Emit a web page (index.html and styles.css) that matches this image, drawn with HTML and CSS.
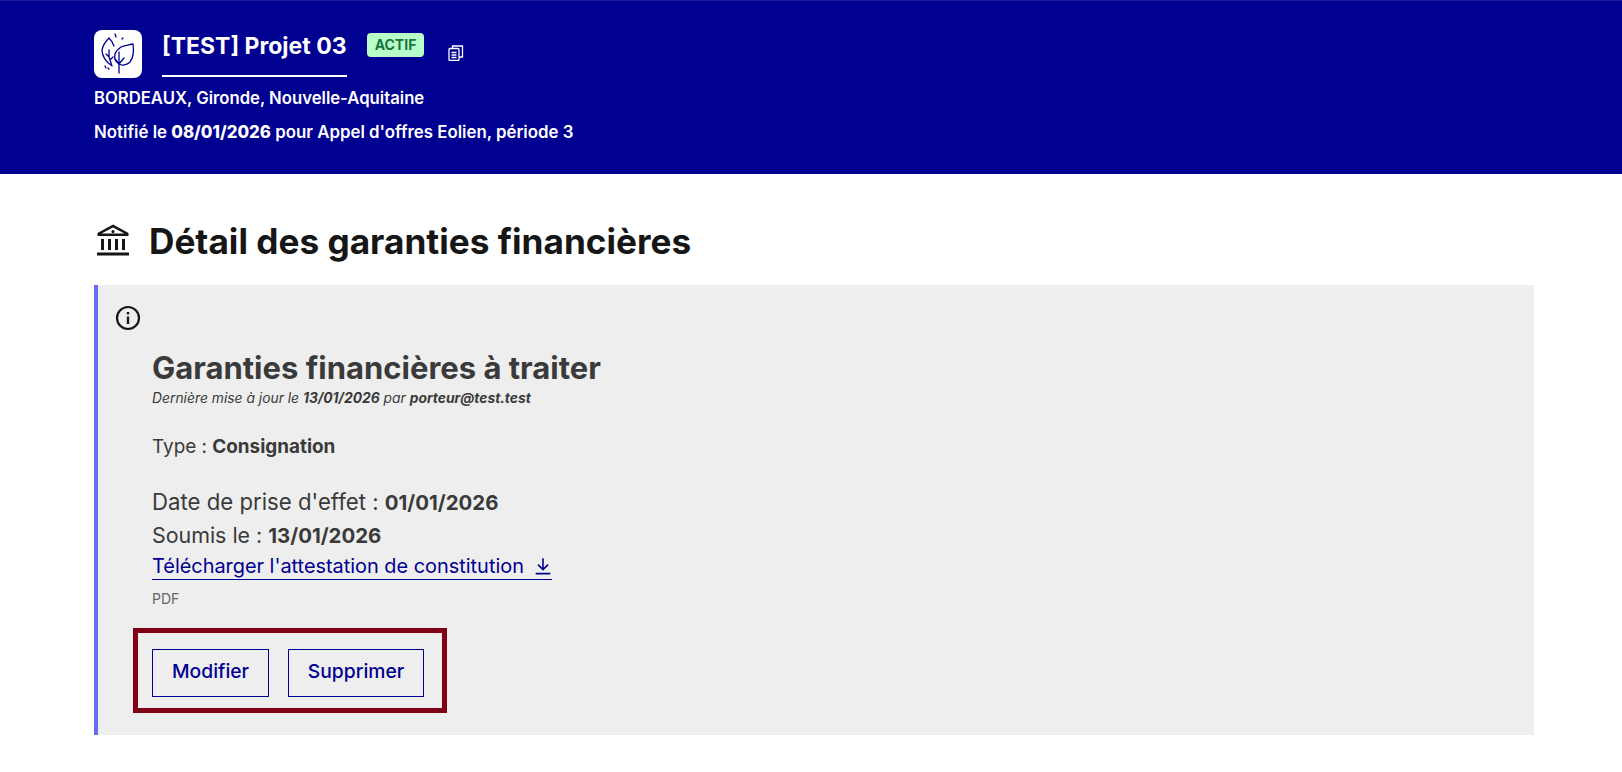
FILE: index.html
```html
<!DOCTYPE html>
<html lang="fr">
<head>
<meta charset="utf-8">
<title>Détail des garanties financières</title>
<link rel="stylesheet" href="styles.css">
</head>
<body>
<header class="banner">
  <div class="banner-top">
    <div class="logo">
      <svg width="48" height="48" viewBox="0 0 48 48" fill="none" stroke="#000091" stroke-width="1.300" stroke-linecap="round" stroke-linejoin="round">
        <path d="M20 16c-1-3-3-6-5-8-3 3-6 7-7 12 0 6 4 12 9 15"/>
        <path d="M15 20v7l3 9M15 27l-3-3M16 30l3-3"/>
        <path d="M39 14c1 7 0 14-3 18-3 3-8 4-11 2-3-2-5-6-4-10 1-3 3-5 6-7 4-2 8-2 12-3z"/>
        <path d="M25 43V22M25 34l-4-5M25 34l5-6"/>
        <path d="M21 4l1 3M28 9l1-1M11 36l1 2M14 38l1 1"/>
      </svg>
    </div>
    <a class="project-title">[TEST] Projet 03</a>
    <span class="badge">ACTIF</span>
    <svg class="copy" width="16" height="16" viewBox="0 0 16 16" fill="none" stroke="#fff" stroke-width="1.300">
      <rect x="1" y="3.500" width="10" height="12" rx="1"/>
      <path d="M4.500 3.500V1h10v11h-3.500"/>
      <path d="M3.500 7.500h5M3.500 10h5M3.500 12.500h5"/>
    </svg>
  </div>
  <p class="banner-line first">BORDEAUX, Gironde, Nouvelle-Aquitaine</p>
  <p class="banner-line second">Notifié le <b>08/01/2026</b> pour Appel d'offres Eolien, période 3</p>
</header>
<main class="content">
  <h1 class="page-title">
    <svg width="36" height="36" viewBox="0 0 36 36" fill="#161616">
      <path d="M18 1.500 33.500 10v3h-31v-3zM18 4.600 6.500 10.500h23zM18 7a1.600 1.600 0 1 1 0 3.200A1.600 1.600 0 0 1 18 7z" fill-rule="evenodd"/>
      <rect x="6" y="16" width="3" height="11"/><rect x="13" y="16" width="3" height="11"/><rect x="20" y="16" width="3" height="11"/><rect x="27" y="16" width="3" height="11"/>
      <rect x="2" y="29.500" width="32" height="3"/>
    </svg>
    <span>Détail des garanties financières</span>
  </h1>
  <section class="alert">
    <svg class="info" width="26" height="26" viewBox="0 0 26 26" fill="none" stroke="#161616" stroke-width="2.200">
      <circle cx="13" cy="13" r="11"/>
      <path d="M13 11.500V19" stroke-width="2.400"/>
      <path d="M13 7v2.400" stroke-width="2.400"/>
    </svg>
    <div class="alert-body">
      <h2 class="alert-title">Garanties financières à traiter</h2>
      <p class="meta">Dernière mise à jour le <b>13/01/2026</b> par <b>porteur@test.test</b></p>
      <p class="type">Type : <b>Consignation</b></p>
      <p class="field date">Date de prise d'effet : <b>01/01/2026</b></p>
      <p class="field">Soumis le : <b>13/01/2026</b></p>
      <a class="download">Télécharger l'attestation de constitution
        <svg width="18" height="18" viewBox="0 0 16 16" fill="none" stroke="#000091" stroke-width="1.400"><path d="M8 1v10M3.500 6.800 8 11.200l4.500-4.400M1.500 14.800h13"/></svg>
      </a>
      <p class="file">PDF</p>
      <div class="actions">
        <button class="btn">Modifier</button>
        <button class="btn">Supprimer</button>
      </div>
    </div>
  </section>
</main>
</body>
</html>
```
FILE: styles.css
```css
* { box-sizing: border-box; }
html, body { margin: 0; padding: 0; background: #fff; }
body { font-family: "Inter", "Liberation Sans", sans-serif; color: #3a3a3a; }
p, h1, h2 { margin: 0; }

.banner { height: 174px; background: #000091; color: #fff; padding: 30px 94px 0; border-top: 1px solid #1a1a9c; }
.banner-top { display: flex; align-items: flex-start; height: 52px; }
.logo { width: 48px; height: 48px; background: #fff; border-radius: 8px; margin-top: -1px; }
.project-title { display: block; margin-left: 20px; font-size: 23px; font-weight: 700; line-height: 30px; height: 46px; border-bottom: 2px solid #fff; width: 185px; white-space: nowrap; }
.badge { margin: 2px 0 0 20px; width: 57px; height: 24px; background: #b8fec9; color: #18753c; border-radius: 4px; font-size: 14px; font-weight: 700; line-height: 24px; text-align: center; }
.copy { margin: 14px 0 0 24px; }
.banner-line { font-size: 16.700px; font-weight: 600; line-height: 24px; margin-top: 10px; white-space: nowrap; }
.banner-line.first { margin-top: 3px; }
.banner-line.second { font-size: 16.850px; }
.banner-line b { font-weight: 800; }

.content { padding: 0 88px 0 94px; }
.page-title { display: flex; align-items: center; gap: 18px; height: 111px; padding-top: 22px; font-size: 35.200px; font-weight: 700; color: #161616; }
.page-title svg { margin-left: 1px; margin-top: 0; }

.alert { display: flex; height: 450px; background: #eee; border-left: 4px solid #6a6af4; padding: 20px 0 0 17px; }
.info { flex: none; }
.alert-body { margin-left: 11px; padding-top: 44px; }
.alert-title { font-size: 31px; font-weight: 700; line-height: 38px; color: #3a3a3a; }
.meta { font-size: 13.850px; font-style: italic; line-height: 20px; margin-top: 1px; }
.type { font-size: 18.900px; line-height: 28px; margin-top: 25px; }
.field { font-size: 21.400px; line-height: 33px; }
.field b { font-size: 20.400px; }
.field.date { font-size: 22.200px; }
.type + .field { margin-top: 24px; }
.download { display: inline-flex; align-items: center; gap: 10px; font-size: 19.900px; line-height: 26px; color: #000091; border-bottom: 1px solid #000091; margin-top: 1px; }
.file { font-size: 14px; line-height: 20px; color: #666; margin-top: 9px; }
.actions { display: inline-flex; gap: 19px; border: 5px solid #800016; padding: 16px 18px 11px 14px; margin: 19px 0 0 -19px; }
.btn { height: 48px; width: 117px; padding: 0 0 4px; background: transparent; border: 1px solid #000091; color: #000091; font: 500 19.300px "Inter", "Liberation Sans", sans-serif; }
.btn + .btn { width: 136px; }
```
